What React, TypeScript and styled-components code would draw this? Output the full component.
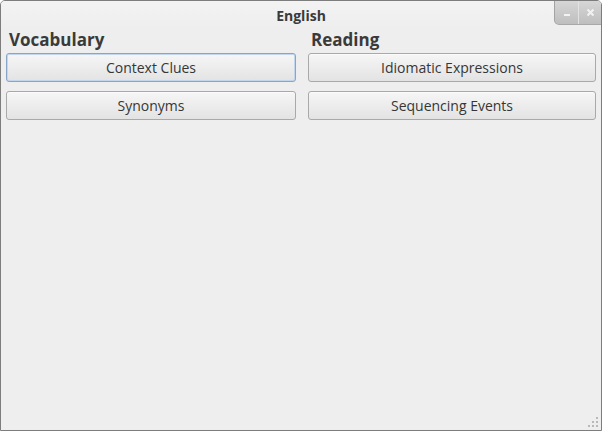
import React from "react";
import styled, { createGlobalStyle } from "styled-components";

const GlobalStyle = createGlobalStyle`
    html, body {
        margin: 0;
        padding: 0;
        background: #ffffff;
    }
    * {
        box-sizing: border-box;
    }
`;

const Window = styled.div`
    position: relative;
    display: flex;
    flex-direction: column;
    width: 602px;
    height: 431px;
    border: 1px solid #7d7d7d;
    border-radius: 5px 5px 0 0;
    background: #eeeeee;
    font-family: "Open Sans", "DejaVu Sans", sans-serif;
    color: #3c3c3c;
    overflow: hidden;
`;

const TitleBar = styled.div`
    position: relative;
    display: flex;
    align-items: center;
    justify-content: center;
    height: 27px;
    padding-top: 1px;
    background: linear-gradient(#f3f3f3, #eeeeee);
`;

const TitleText = styled.span`
    font-size: 14px;
    font-weight: 700;
    color: #3a3a3a;
`;

const WindowControls = styled.div`
    position: absolute;
    top: 0;
    right: 0;
    display: flex;
    height: 24px;
    border-left: 1px solid #a3a3a3;
    border-bottom: 1px solid #a8a8a8;
    border-radius: 0 0 0 5px;
    background: linear-gradient(#d6d6d6, #bebebe);
    overflow: hidden;
`;

const ControlButton = styled.div<{ divider?: boolean }>`
    display: flex;
    align-items: center;
    justify-content: center;
    width: 23px;
    height: 100%;
    border-left: ${p => (p.divider ? "1px solid #e2e2e2" : "none")};
`;

const Content = styled.div`
    display: grid;
    grid-template-columns: 290px 288px;
    column-gap: 12px;
    padding: 0 5px;
`;

const Column = styled.div`
    display: flex;
    flex-direction: column;
    gap: 9px;
`;

const Heading = styled.h2<{ indent: number }>`
    margin: 0 0 -7px 0;
    padding-left: ${p => p.indent}px;
    font-size: 17px;
    line-height: 23px;
    font-weight: 700;
    color: #3a3a3a;
`;

const Button = styled.button<{ focused?: boolean }>`
    height: 29px;
    padding: 0;
    border: 1px solid ${p => (p.focused ? "#88a4c8" : "#a9a9a9")};
    border-radius: 3px;
    background: linear-gradient(#f6f6f6, #e3e3e3);
    box-shadow: ${p => (p.focused ? "inset 0 0 0 1px #c2d6ee" : "inset 0 1px 0 #fbfbfb")};
    font-family: inherit;
    font-size: 14px;
    color: #363636;
    cursor: pointer;
`;

const Grip = styled.svg`
    position: absolute;
    right: 2px;
    bottom: 2px;
`;

const App = () => {
    return (
        <>
            <GlobalStyle />
            <Window>
                <TitleBar>
                    <TitleText>English</TitleText>
                    <WindowControls>
                        <ControlButton>
                            <svg width="8" height="8" viewBox="0 0 8 8">
                                <rect x="1" y="5" width="6" height="2" fill="#f2f2f2" />
                            </svg>
                        </ControlButton>
                        <ControlButton divider>
                            <svg width="9" height="9" viewBox="0 0 9 9">
                                <path d="M1.5 1.5 L7.5 7.5 M7.5 1.5 L1.5 7.5" stroke="#f2f2f2" strokeWidth="2" />
                            </svg>
                        </ControlButton>
                    </WindowControls>
                </TitleBar>
                <Content>
                    <Column>
                        <Heading indent={3}>Vocabulary</Heading>
                        <Button focused>Context Clues</Button>
                        <Button>Synonyms</Button>
                    </Column>
                    <Column>
                        <Heading indent={3}>Reading</Heading>
                        <Button>Idiomatic Expressions</Button>
                        <Button>Sequencing Events</Button>
                    </Column>
                </Content>
                <Grip width="11" height="11" viewBox="0 0 11 11">
                    <rect x="8" y="0" width="2" height="2" fill="#b9b9b9" />
                    <rect x="4" y="4" width="2" height="2" fill="#b9b9b9" />
                    <rect x="8" y="4" width="2" height="2" fill="#b9b9b9" />
                    <rect x="0" y="8" width="2" height="2" fill="#b9b9b9" />
                    <rect x="4" y="8" width="2" height="2" fill="#b9b9b9" />
                    <rect x="8" y="8" width="2" height="2" fill="#b9b9b9" />
                </Grip>
            </Window>
        </>
    );
};

export default App;
